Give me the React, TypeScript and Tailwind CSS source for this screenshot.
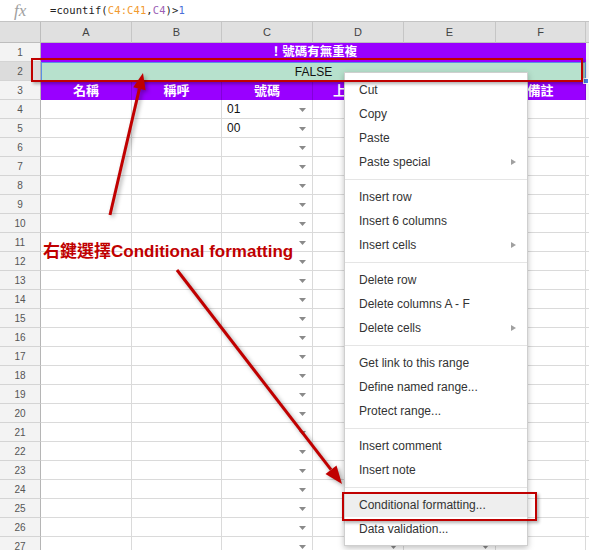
import React from "react";

const COLS = ["A", "B", "C", "D", "E", "F"];

type MenuEntry = { label: string; sub?: boolean; active?: boolean } | "sep";

const MENU: MenuEntry[] = [
  { label: "Cut" },
  { label: "Copy" },
  { label: "Paste" },
  { label: "Paste special", sub: true },
  "sep",
  { label: "Insert row" },
  { label: "Insert 6 columns" },
  { label: "Insert cells", sub: true },
  "sep",
  { label: "Delete row" },
  { label: "Delete columns A - F" },
  { label: "Delete cells", sub: true },
  "sep",
  { label: "Get link to this range" },
  { label: "Define named range..." },
  { label: "Protect range..." },
  "sep",
  { label: "Insert comment" },
  { label: "Insert note" },
  "sep",
  { label: "Conditional formatting...", active: true },
  { label: "Data validation..." },
];

// D/E headers sit under the context menu; only the first glyph of D peeks out
const HEADERS = ["名稱", "稱呼", "號碼", "上", "", "備註"];

function Caret() {
  return (
    <svg width="7" height="4" viewBox="0 0 7 4" className="absolute right-[6px] top-[8px]">
      <polygon points="0,0 7,0 3.5,4" fill="#8a8a8a" />
    </svg>
  );
}

function RowNum({ n, selected }: { n: number; selected?: boolean }) {
  return (
    <div
      className={`h-[19px] flex items-center justify-center text-[10px] text-[#555] border-b border-[#d4d4d4] border-r border-r-[#b5b5b5] ${
        selected ? "bg-[#dcdcdc]" : "bg-[#f3f3f3]"
      }`}
    >
      {n}
    </div>
  );
}

export default function App() {
  const dataRows = Array.from({ length: 24 }, (_, i) => i + 4);

  return (
    <div className="relative w-[589px] h-[550px] overflow-hidden bg-white font-['Liberation_Sans','Noto_Sans_CJK_TC',sans-serif]">
      {/* formula bar */}
      <div className="h-[22px] flex items-center border-b border-[#c4c4c4]">
        <span className="w-[50px] pl-[14px] font-['Liberation_Serif',serif] italic text-[17px] text-[#a0a0a0] leading-none">
          fx
        </span>
        <span className="font-['DejaVu_Sans_Mono',monospace] text-[10.5px] text-[#222] tracking-[0.1px]">
          =countif(<span className="text-[#f29a2e]">C4:C41</span>,<span className="text-[#9c5fb5]">C4</span>)&gt;
          <span className="text-[#4b6fd8]">1</span>
        </span>
      </div>

      {/* sheet grid */}
      <div className="grid grid-cols-[41px_91px_90px_91px_91px_92px_90px_3px]">
        {/* column headers */}
        <div className="h-[21px] bg-[#e0e0e0] border-r border-b border-[#bdbdbd]" />
        {COLS.map((c) => (
          <div
            key={c}
            className="h-[21px] bg-[#e0e0e0] border-r border-b border-[#c6c6c6] border-b-[#bdbdbd] flex items-center justify-center text-[11px] text-[#444]"
          >
            {c}
          </div>
        ))}
        <div className="h-[21px] bg-[#e0e0e0] border-b border-[#bdbdbd]" />

        {/* row 1 */}
        <RowNum n={1} />
        <div className="col-span-6 h-[19px] bg-[#9900ff] flex items-center justify-center text-[12.5px] font-bold text-white">
          ！號碼有無重複
        </div>
        <div className="h-[19px] bg-[#f3f3f3]" />

        {/* row 2 */}
        <RowNum n={2} selected />
        <div className="col-span-6 h-[19px] bg-[#b7e1cd] border border-[#5a8ee6] flex items-center justify-center text-[12px] text-[#111]">
          FALSE
        </div>
        <div className="h-[19px] bg-[#f3f3f3]" />

        {/* row 3 */}
        <RowNum n={3} />
        {HEADERS.map((h, i) => (
          <div
            key={i}
            className={`h-[19px] bg-[#9900ff] border-r border-[#8200d9] flex items-center text-[13px] font-bold text-white ${
              i === 3 ? "justify-start pl-[20px]" : "justify-center"
            }`}
          >
            {h}
          </div>
        ))}
        <div className="h-[19px] bg-[#f3f3f3]" />

        {dataRows.map((r) => (
          <React.Fragment key={r}>
            <RowNum n={r} />
            {COLS.map((c) => (
              <div key={c} className="relative h-[19px] border-r border-b border-[#dadada] text-[12px] text-[#111] pl-[5px] flex items-center">
                {c === "C" && r === 4 && "01"}
                {c === "C" && r === 5 && "00"}
                {(c === "C" || c === "D" || c === "E") && <Caret />}
              </div>
            ))}
            <div className="h-[19px] border-b border-[#dadada]" />
          </React.Fragment>
        ))}
      </div>

      {/* fill handle */}
      <div className="absolute left-[583px] top-[78px] w-[6px] h-[6px] bg-[#4a86e8] border border-white" />

      {/* context menu */}
      <div className="absolute left-[344px] top-[72px] w-[184px] bg-white border border-[#cfcfcf] shadow-[0_2px_6px_rgba(0,0,0,0.25)] pt-[5px] pb-[4px]">
        {MENU.map((m, i) =>
          m === "sep" ? (
            <div key={i} className="my-[5px] h-px bg-[#e5e5e5]" />
          ) : (
            <div
              key={i}
              className={`h-[24px] flex items-center pl-[14px] text-[12px] text-[#333] ${m.active ? "bg-[#eeeeee]" : ""}`}
            >
              <span>{m.label}</span>
              {m.sub && (
                <svg width="5" height="6" viewBox="0 0 5 6" className="ml-auto mr-[11px]">
                  <polygon points="0,0 5,3 0,6" fill="#a0a0a0" />
                </svg>
              )}
            </div>
          )
        )}
      </div>

      {/* annotations */}
      <div className="absolute left-[31px] top-[58px] w-[552px] h-[24px] border-2 border-[#c00000] shadow-[2px_2px_3px_rgba(0,0,0,0.3)]" />
      <div className="absolute left-[342px] top-[492px] w-[195px] h-[29px] border-2 border-[#c00000] shadow-[2px_2px_3px_rgba(0,0,0,0.3)]" />

      <div className="absolute left-[43px] top-[241px] text-[17px] leading-[22px] font-bold text-[#c00000] whitespace-nowrap">
        右鍵選擇Conditional formatting
      </div>

      <svg
        width="589"
        height="550"
        viewBox="0 0 589 550"
        className="absolute left-0 top-0 pointer-events-none drop-shadow-[2px_2px_2px_rgba(0,0,0,0.35)]"
      >
        <line x1="110" y1="215" x2="139.4" y2="88.6" stroke="#c00000" strokeWidth="3" />
        <polygon points="143,73 145.6,90.2 133.2,87.2" fill="#c00000" />
        <line x1="177" y1="270" x2="331" y2="469.7" stroke="#c00000" strokeWidth="3" />
        <polygon points="342,484 325.5,474 336.5,465.4" fill="#c00000" />
      </svg>
    </div>
  );
}
